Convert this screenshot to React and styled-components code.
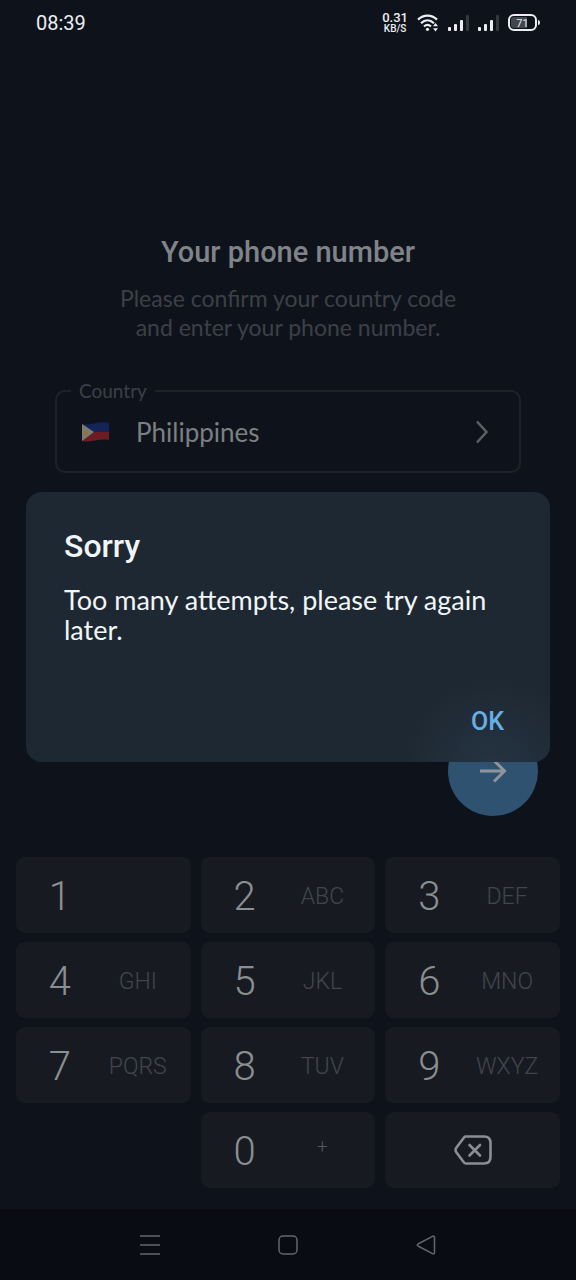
import React from "react";
import styled, { createGlobalStyle } from "styled-components";

const Global = createGlobalStyle`
  *, *::before, *::after { box-sizing: border-box; }
  body { margin: 0; background: #0e131b; font-family: Roboto, "Liberation Sans", sans-serif; }
  button { font: inherit; border: 0; padding: 0; cursor: pointer; }
  svg { display: block; }
`;

const Screen = styled.div`
  position: relative;
  display: flex;
  flex-direction: column;
  min-height: 100vh;
  background: #0e131b;
`;

const StatusBar = styled.header`
  display: flex;
  align-items: center;
  justify-content: space-between;
  height: 45px;
  padding: 0 36px;
  color: #eceef1;
`;

const Clock = styled.time`
  font-size: 20px;
  line-height: 24px;
`;

const StatusIcons = styled.div`
  display: flex;
  align-items: center;
  gap: 9px;
`;

const Speed = styled.div`
  display: flex;
  flex-direction: column;
  align-items: center;
  font-weight: 500;
  line-height: 12px;
`;

const SpeedValue = styled.span`
  font-size: 13px;
`;

const SpeedUnit = styled.span`
  font-size: 10px;
  line-height: 10px;
`;

const Main = styled.main`
  display: flex;
  flex: 1;
  flex-direction: column;
  padding-top: 190px;
`;

const Title = styled.h1`
  margin: 0 0 15px;
  color: #808388;
  font-size: 29px;
  font-weight: 500;
  line-height: 34px;
  text-align: center;
`;

const Hint = styled.p`
  width: 360px;
  max-width: 100%;
  margin: 0 auto 37px;
  color: #3c4047;
  font-family: Lato, sans-serif;
  font-size: 23px;
  line-height: 29px;
  text-align: center;
`;

const CountryField = styled.fieldset`
  min-width: 0;
  margin: 0 55px;
  padding: 0;
  border: 2px solid #1f2329;
  border-radius: 10px;
`;

const CountryLabel = styled.legend`
  margin-left: 14px;
  padding: 0 8px;
  color: #3c4047;
  font-family: Lato, sans-serif;
  font-size: 19px;
  line-height: 24px;
`;

const CountryButton = styled.button`
  display: flex;
  align-items: center;
  width: 100%;
  height: 68px;
  padding: 0 30px 10px 24px;
  background: none;
  color: #7c7f84;
  font-family: Lato, sans-serif;
  font-size: 26px;
  text-align: left;
`;

const CountryName = styled.span`
  flex: 1;
  margin-left: 26px;
`;

const NextButton = styled.button`
  display: flex;
  align-items: center;
  justify-content: center;
  align-self: flex-end;
  width: 90px;
  height: 90px;
  margin: auto 38px 41px 0;
  border-radius: 50%;
  background: #2f5271;
  color: #90959b;
`;

const Keypad = styled.div`
  display: grid;
  grid-template-columns: repeat(3, 1fr);
  gap: 9px 10px;
  padding: 0 16px 21px;
`;

const Key = styled.button`
  display: grid;
  grid-template-columns: 1fr 1fr;
  grid-column: ${(p) => p.$column || "auto"};
  align-items: center;
  justify-items: center;
  height: 76px;
  padding: 4px 14px 0 5px;
  border-radius: 9px;
  background: #171b21;
  color: #8b8e92;
`;

const EraseKey = styled(Key)`
  grid-template-columns: 1fr;
  padding: 0;
`;

const Digit = styled.span`
  font-size: 40px;
  font-weight: 300;
  line-height: 44px;
`;

const Letters = styled.span`
  color: ${(p) => (p.$symbol ? "#54575c" : "#42464c")};
  font-size: ${(p) => (p.$symbol ? 19 : 23)}px;
  font-weight: 300;
  line-height: 28px;
  padding-bottom: ${(p) => (p.$symbol ? 10 : 0)}px;
`;

const NavBar = styled.nav`
  display: flex;
  align-items: center;
  justify-content: center;
  gap: 110px;
  height: 71px;
  background: #090d13;
  color: #63666a;
`;

const NavButton = styled.button`
  display: flex;
  align-items: center;
  justify-content: center;
  width: 28px;
  height: 28px;
  background: none;
  color: inherit;
`;

const Overlay = styled.div`
  position: absolute;
  inset: 45px 0 71px;
  display: flex;
  align-items: center;
  justify-content: center;
  padding: 0 26px;
`;

const Dialog = styled.section`
  display: flex;
  flex: 1;
  flex-direction: column;
  min-height: 270px;
  padding: 34px 38px 23px;
  border-radius: 16px;
  background: radial-gradient(circle at 466px 278px, #253443 0, #1e2832 90px);
  color: #f1f5f8;
`;

const DialogTitle = styled.h2`
  margin: 0 0 19px;
  font-size: 32px;
  font-weight: 500;
  line-height: 40px;
`;

const DialogText = styled.p`
  margin: 0;
  font-family: Lato, sans-serif;
  font-size: 27px;
  line-height: 30px;
`;

const DialogAction = styled.button`
  align-self: flex-end;
  margin-top: auto;
  padding: 0 8px;
  background: none;
  color: #69aee4;
  font-size: 25px;
  font-weight: 500;
  line-height: 34px;
`;

const KEYS = [
  ["1", ""], ["2", "ABC"], ["3", "DEF"],
  ["4", "GHI"], ["5", "JKL"], ["6", "MNO"],
  ["7", "PQRS"], ["8", "TUV"], ["9", "WXYZ"],
  ["0", "+"],
];

const WifiIcon = () => (
  <svg width="22" height="18" viewBox="0 0 22 18" fill="none" stroke="currentColor" strokeWidth="2.2">
    <path d="M1 5.6C6.500 0.300 14.500 0.300 20 5.600" />
    <path d="M4 9.200C8 5.400 13 5.400 17 9.200" />
    <path d="M7 12.500C9.200 10.500 11.800 10.500 14 12.500" />
    <circle cx="10.500" cy="15.300" r="1.600" fill="currentColor" stroke="none" />
    <path d="M16 12.300L18.500 9L21 12.300ZM16 14.200L18.500 17.500L21 14.200Z" fill="currentColor" stroke="none" />
  </svg>
);

const SignalIcon = () => (
  <svg width="21" height="16" viewBox="0 0 21 16" fill="currentColor">
    <rect x="0" y="12" width="3" height="4" rx="1" />
    <rect x="6" y="9" width="3" height="7" rx="1" />
    <rect x="12" y="5" width="3" height="11" rx="1" />
    <rect x="18" y="0" width="3" height="16" rx="1" fill="#34383f" />
  </svg>
);

const BatteryIcon = () => (
  <svg width="32" height="18" viewBox="0 0 32 18" role="img" aria-label="Battery 71%">
    <rect x="1" y="1" width="27" height="15" rx="5" fill="none" stroke="currentColor" strokeWidth="2" />
    <path d="M6 3H19V14H6Q3 14 3 11V6Q3 3 6 3Z" fill="#42464d" />
    <path d="M30 6Q32 6 32 8.500Q32 11 30 11Z" fill="currentColor" />
    <text x="14.500" y="12.500" textAnchor="middle" fontSize="11" fill="currentColor">71</text>
  </svg>
);

const FlagIcon = () => (
  <svg width="29" height="22" viewBox="0 0 29 22">
    <path d="M1 3C10 5 18 -1 28 2V11C18 9 10 13 1 12Z" fill="#142458" />
    <path d="M1 12C10 13 18 9 28 11V19C18 17 10 22 1 20Z" fill="#6d1c24" />
    <path d="M1 3L13 11L1 20Z" fill="#7d7a72" />
    <circle cx="5" cy="11.500" r="2" fill="#8b7630" />
  </svg>
);

const ChevronIcon = () => (
  <svg width="14" height="24" viewBox="0 0 14 24" fill="none" stroke="#5c5f65" strokeWidth="2.500">
    <path d="M2 1.500L11.500 12L2 22.500" />
  </svg>
);

const ArrowIcon = () => (
  <svg width="28" height="24" viewBox="0 0 28 24" fill="none" stroke="currentColor" strokeWidth="3">
    <path d="M1 12H25M15 1.500L25.500 12L15 22.500" />
  </svg>
);

const EraseIcon = () => (
  <svg width="38" height="30" viewBox="0 0 38 30" fill="none" stroke="currentColor" strokeWidth="2.600" strokeLinecap="round" strokeLinejoin="round">
    <path d="M12 1.500H30Q36.500 1.500 36.500 8V22Q36.500 28.500 30 28.500H12Q10.800 28.500 10 27.500L2.300 17.200Q0.800 15 2.300 12.800L10 2.500Q10.800 1.500 12 1.500Z" />
    <path d="M15.500 10L26 20.500M26 10L15.500 20.500" />
  </svg>
);

export default function App() {
  return (
    <Screen>
      <Global />
      <StatusBar>
        <Clock>08:39</Clock>
        <StatusIcons>
          <Speed>
            <SpeedValue>0.31</SpeedValue>
            <SpeedUnit>KB/S</SpeedUnit>
          </Speed>
          <WifiIcon />
          <SignalIcon />
          <SignalIcon />
          <BatteryIcon />
        </StatusIcons>
      </StatusBar>

      <Main>
        <Title>Your phone number</Title>
        <Hint>Please confirm your country code and enter your phone number.</Hint>
        <CountryField>
          <CountryLabel>Country</CountryLabel>
          <CountryButton type="button">
            <FlagIcon />
            <CountryName>Philippines</CountryName>
            <ChevronIcon />
          </CountryButton>
        </CountryField>
        <NextButton type="button" aria-label="Next">
          <ArrowIcon />
        </NextButton>
        <Keypad>
          {KEYS.map(([digit, letters]) => (
            <Key key={digit} type="button" $column={digit === "0" ? "2" : undefined}>
              <Digit>{digit}</Digit>
              <Letters $symbol={letters === "+"}>{letters}</Letters>
            </Key>
          ))}
          <EraseKey type="button" aria-label="Delete">
            <EraseIcon />
          </EraseKey>
        </Keypad>
      </Main>

      <NavBar>
        <NavButton type="button" aria-label="Menu">
          <svg width="20" height="20" viewBox="0 0 20 20" stroke="currentColor" strokeWidth="1.600">
            <path d="M0 1H20M0 10H20M0 19H20" />
          </svg>
        </NavButton>
        <NavButton type="button" aria-label="Home">
          <svg width="20" height="20" viewBox="0 0 20 20" fill="none" stroke="currentColor" strokeWidth="1.500">
            <rect x="1" y="1" width="18" height="18" rx="4" />
          </svg>
        </NavButton>
        <NavButton type="button" aria-label="Back">
          <svg width="20" height="20" viewBox="0 0 20 20" fill="none" stroke="currentColor" strokeWidth="1.500" strokeLinejoin="round">
            <path d="M17 1.200L2 9Q0.500 10 2 11L17 18.800Q18.500 19.300 18.500 17.500V2.500Q18.500 0.700 17 1.200Z" />
          </svg>
        </NavButton>
      </NavBar>

      <Overlay>
        <Dialog role="alertdialog" aria-labelledby="dialog-title" aria-describedby="dialog-text">
          <DialogTitle id="dialog-title">Sorry</DialogTitle>
          <DialogText id="dialog-text">Too many attempts, please try again later.</DialogText>
          <DialogAction type="button">OK</DialogAction>
        </Dialog>
      </Overlay>
    </Screen>
  );
}
